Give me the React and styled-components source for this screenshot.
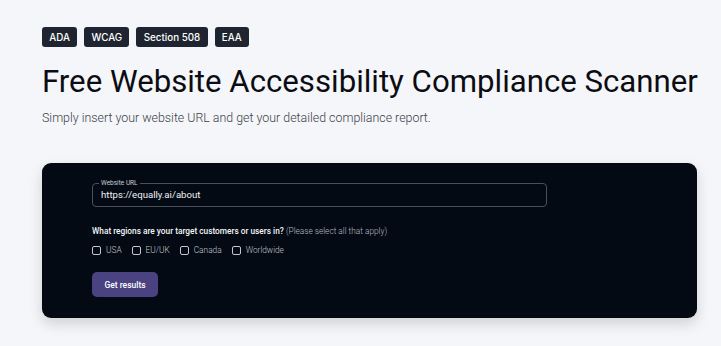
import React from "react";
import styled, { createGlobalStyle } from "styled-components";

const Global = createGlobalStyle`
  html, body { margin: 0; padding: 0; background: #f5f6fa; }
  body { font-family: Roboto, "Noto Sans", sans-serif; }
  * { box-sizing: border-box; }
`;

const Page = styled.main`
  padding: 27px 24px 28px 42px;
`;

const Badges = styled.div`
  display: flex;
  gap: 7px;
`;

const Badge = styled.span`
  display: inline-flex;
  align-items: center;
  height: 20px;
  padding: 0 7.3px;
  background: #1f2530;
  color: #ffffff;
  border-radius: 3px;
  font-family: Inter, sans-serif;
  font-size: 9.8px;
  font-weight: 500;
`;

const Title = styled.h1`
  margin: 17px 0 0;
  font-family: Roboto, sans-serif;
  font-weight: 400;
  font-size: 31.2px;
  line-height: 36px;
  color: #0b0d12;
  white-space: nowrap;
`;

const Subtitle = styled.p`
  margin: 10px 0 0;
  font-family: Roboto, sans-serif;
  font-weight: 300;
  font-size: 12.4px;
  color: #3a3f47;
`;

const Card = styled.section`
  margin-top: 38px;
  width: 655px;
  background: #030a14;
  border-radius: 9px;
  padding: 16px 50px 21px 50px;
  box-shadow: 0 6px 14px rgba(0, 0, 0, 0.15);
`;

const Field = styled.fieldset`
  margin: 0;
  width: 455px;
  height: 28px;
  border: 1px solid #4a505b;
  border-radius: 4px;
  padding: 0 8px;
`;

const Legend = styled.legend`
  font-size: 6.5px;
  color: #c9ccd2;
  padding: 0 2px;
  margin-left: -2px;
  line-height: 8px;
`;

const UrlText = styled.div`
  font-size: 9.6px;
  color: #f1f2f4;
  line-height: 12px;
  margin-top: 2px;
`;

const Question = styled.p`
  margin: 19px 0 0;
  font-size: 8.3px;
  color: #f4f5f7;
  font-weight: 500;
`;

const Hint = styled.span`
  font-weight: 300;
  color: #b9bdc4;
`;

const Options = styled.div`
  display: flex;
  gap: 10px;
  margin-top: 9px;
`;

const Option = styled.label`
  display: inline-flex;
  align-items: center;
  gap: 5px;
  font-size: 8.3px;
  font-weight: 300;
  color: #c3c6cc;
`;

const Box = styled.span`
  width: 9px;
  height: 9px;
  border: 1px solid #c3c6cc;
  border-radius: 2px;
`;

const Button = styled.button`
  margin-top: 17px;
  height: 25px;
  width: 66px;
  border: none;
  border-radius: 5px;
  background: #4a4281;
  color: #ffffff;
  font-family: Roboto, sans-serif;
  font-size: 8.5px;
  font-weight: 500;
  display: block;
`;

export default function App() {
  return (
    <>
      <Global />
      <Page>
        <Badges>
          {["ADA", "WCAG", "Section 508", "EAA"].map((b) => (
            <Badge key={b}>{b}</Badge>
          ))}
        </Badges>
        <Title>Free Website Accessibility Compliance Scanner</Title>
        <Subtitle>Simply insert your website URL and get your detailed compliance report.</Subtitle>
        <Card>
          <Field>
            <Legend>Website URL</Legend>
            <UrlText>https://equally.ai/about</UrlText>
          </Field>
          <Question>
            What regions are your target customers or users in? <Hint>(Please select all that apply)</Hint>
          </Question>
          <Options>
            {["USA", "EU/UK", "Canada", "Worldwide"].map((o) => (
              <Option key={o}>
                <Box />
                {o}
              </Option>
            ))}
          </Options>
          <Button>Get results</Button>
        </Card>
      </Page>
    </>
  );
}
